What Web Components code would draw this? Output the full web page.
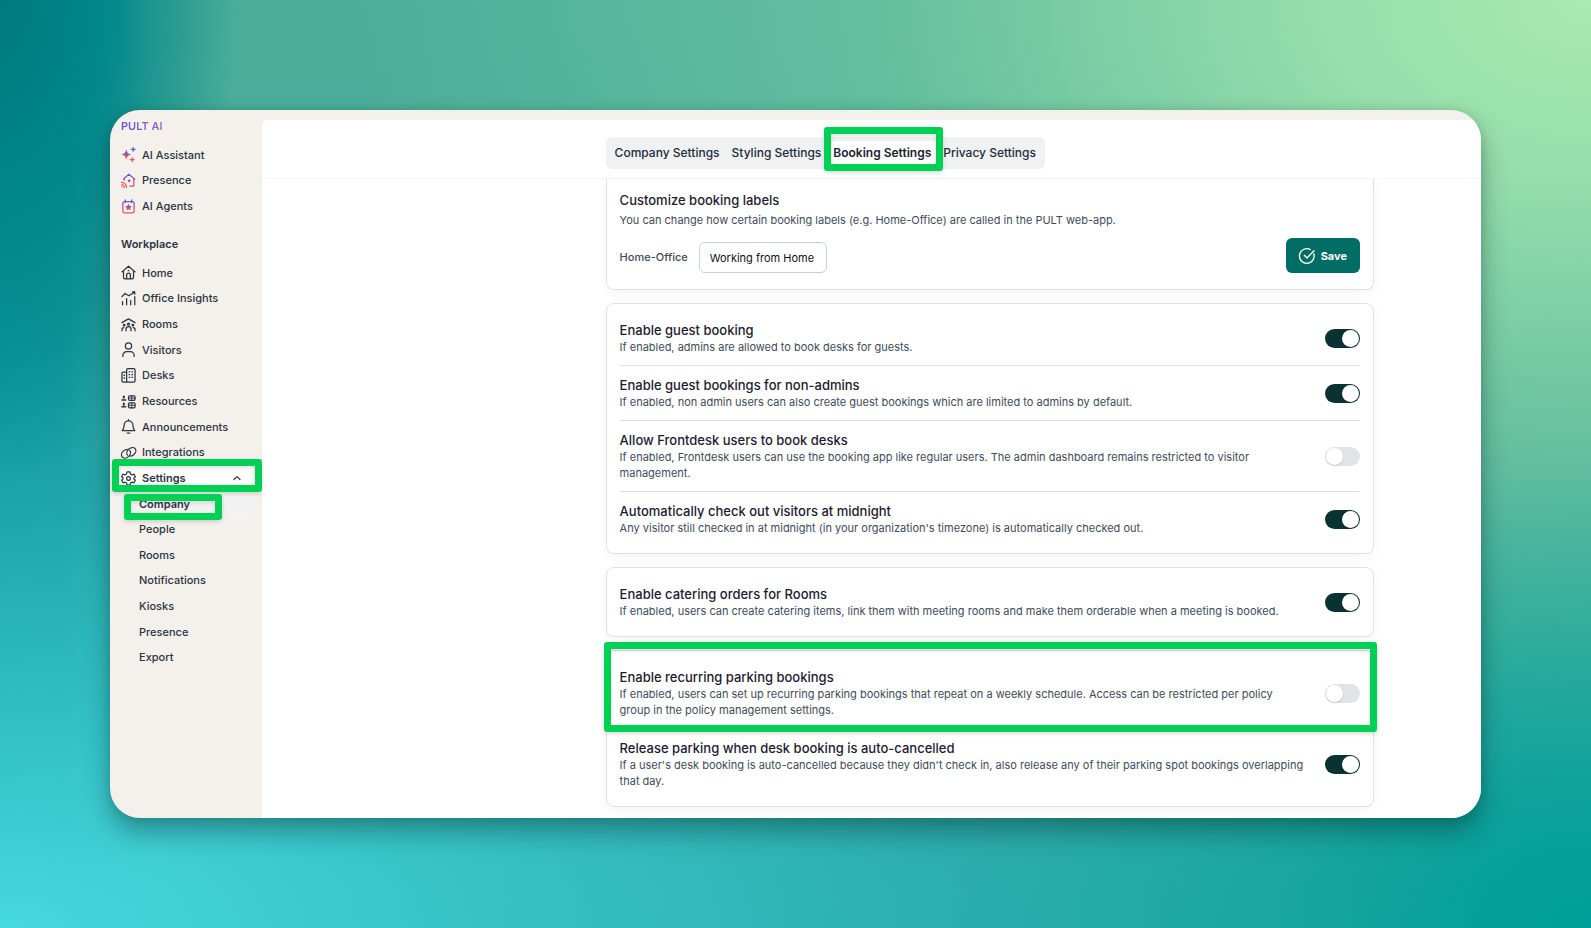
<!DOCTYPE html>
<html lang="en">
<head>
<meta charset="utf-8">
<title>PULT - Booking Settings</title>
<style>
    html {
        height: 100%;
    }
    body {
        margin: 0;
        min-height: 100vh;
        box-sizing: border-box;
        padding: 110px;
        font-family: Inter, "Open Sans", sans-serif;
        font-size: 12px;
        line-height: 16px;
        color: #2b3442;
        --ink: #1d1b31;
        --muted: #404b5a;
        --line: #dfe1e7;
        --mark: #00d154;
        background:
            radial-gradient(ellipse 15% 52% at 0 0, #007a7e 0%, #00868af0 45%, #00929600 100%),
            radial-gradient(ellipse 40% 50% at 100% 100%, #009e98 0%, #009e98e0 20%, #009e9800 100%),
            radial-gradient(ellipse 78% 88% at 100% 0, #a8eab0 0%, #96deab 22%, #70c8a2a0 58%, #50b29c00 100%),
            radial-gradient(ellipse 85% 66% at 0 100%, #45d9e0 0%, #36c6cbd8 35%, #24aab1a0 72%, #1fa3aa00 100%),
            linear-gradient(90deg, #0a989e 0%, #0f999e 4%, #0f999e00 9%),
            linear-gradient(180deg, #4cae99 0%, #46ab98 50%, #38b2a9 100%);
    }
</style>
</head>
<body>

<app-window>
    <side-nav slot="side">
        <nav-heading tone="ai">PULT AI</nav-heading>
        <nav-list rows="3">
            <nav-item icon="sparkles">AI Assistant</nav-item>
            <nav-item icon="presence">Presence</nav-item>
            <nav-item icon="agents">AI Agents</nav-item>
        </nav-list>
        <nav-heading>Workplace</nav-heading>
        <nav-list rows="9">
            <nav-item icon="home">Home</nav-item>
            <nav-item icon="insights">Office Insights</nav-item>
            <nav-item icon="rooms">Rooms</nav-item>
            <nav-item icon="user">Visitors</nav-item>
            <nav-item icon="desks">Desks</nav-item>
            <nav-item icon="resources">Resources</nav-item>
            <nav-item icon="bell">Announcements</nav-item>
            <nav-item icon="link">Integrations</nav-item>
            <nav-item icon="gear" open>Settings<mark-frame slot="mark" class="item"></mark-frame></nav-item>
        </nav-list>
        <nav-list rows="7">
            <nav-item current>Company<mark-frame slot="mark" class="sub"></mark-frame></nav-item>
            <nav-item>People</nav-item>
            <nav-item>Rooms</nav-item>
            <nav-item>Notifications</nav-item>
            <nav-item>Kiosks</nav-item>
            <nav-item>Presence</nav-item>
            <nav-item>Export</nav-item>
        </nav-list>
    </side-nav>

    <tab-bar slot="tabs">
        <tab-link>Company Settings</tab-link>
        <tab-link>Styling Settings</tab-link>
        <tab-link active>Booking Settings<mark-frame slot="mark"></mark-frame></tab-link>
        <tab-link>Privacy Settings</tab-link>
    </tab-bar>

    <settings-card scrolled>
        <label-form name="Home-Office" value="Working from Home">
            <span slot="title">Customize booking labels</span>
            You can change how certain booking labels (e.g. Home-Office) are called in the PULT web-app.
        </label-form>
    </settings-card>

    <settings-card>
        <setting-row name="Enable guest booking" on>If enabled, admins are allowed to book desks for guests.</setting-row>
        <setting-row name="Enable guest bookings for non-admins" on>If enabled, non admin users can also create guest bookings which are limited to admins by default.</setting-row>
        <setting-row name="Allow Frontdesk users to book desks">If enabled, Frontdesk users can use the booking app like regular users. The admin dashboard remains restricted to visitor management.</setting-row>
        <setting-row name="Automatically check out visitors at midnight" on>Any visitor still checked in at midnight (in your organization's timezone) is automatically checked out.</setting-row>
    </settings-card>

    <settings-card>
        <setting-row name="Enable catering orders for Rooms" on>If enabled, users can create catering items, link them with meeting rooms and make them orderable when a meeting is booked.</setting-row>
    </settings-card>

    <settings-card>
        <setting-row name="Enable recurring parking bookings">If enabled, users can set up recurring parking bookings that repeat on a weekly schedule. Access can be restricted per policy group in the policy management settings.<mark-frame slot="mark"></mark-frame></setting-row>
        <setting-row name="Release parking when desk booking is auto-cancelled" on>If a user's desk booking is auto-cancelled because they didn't check in, also release any of their parking spot bookings overlapping that day.</setting-row>
    </settings-card>
</app-window>

<script>
// Icon bodies, all drawn on a 24x24 grid
const ICONS = {
    sparkles: `
        <path fill="url(#ai)" stroke="none" d="M8.500 3c1 6 3 8 8.500 9-5.500 1-7.500 3-8.500 9-1-6-3-8-8.500-9 5.500-1 7.500-3 8.500-9z"/>
        <path d="M19.500 .8v6M16.500 3.800h6" stroke="#5b5bd6"/>
        <path d="M18 17.200v6M15 20.200h6" stroke="#f0505c"/>`,
    presence: `
        <path stroke="url(#ai)" d="M4 9.500 12.500 2 22 10h-1.500v11H14M5 9.500v2"/>
        <circle cx="13" cy="12.500" r="2.200" fill="url(#ai)" stroke="none"/>
        <path stroke="#f0505c" d="M1 15a8 8 0 0 1 8 8M1 19a4 4 0 0 1 4 4"/>
        <circle cx="1.500" cy="22.500" r="1" fill="#f0505c" stroke="none"/>`,
    agents: `
        <rect x="3" y="4" width="18" height="18" rx="3" stroke="url(#ai)"/>
        <path stroke="#5b5bd6" d="M7 1.500v4M17 1.500v4"/>
        <path fill="url(#ai)" stroke="none" d="m12 7.500 1.700 3.500 3.800.5-2.800 2.700.7 3.800-3.400-1.800L8.600 18l.7-3.800-2.800-2.700 3.800-.5z"/>`,
    home: `<path d="M1.500 11 12 2l10.500 9M4 9.500V20a2 2 0 0 0 2 2h12a2 2 0 0 0 2-2V9.500M9 22v-6a3 3 0 0 1 6 0v6M11.500 9h1"/>`,
    insights: `<path d="m1.500 9 5-5 6 3.500L22 1.500M18.500 1.500H22V5M2.500 22v-5M9 22V12M15.500 22v-7M22 22V9"/>`,
    rooms: `
        <path d="M1.500 9 12 3l10.500 6M12 15.500c-2.500 0-4 2-4 4.500V22m4-6.500c2.500 0 4 2 4 4.500V22M1.500 22v-1.500c0-2 1-3.500 3-3.500M22.500 22v-1.500c0-2-1-3.500-3-3.500"/>
        <circle cx="12" cy="11.500" r="1.600"/><circle cx="5" cy="13" r="1.200"/><circle cx="19" cy="13" r="1.200"/>`,
    user: `<circle cx="12" cy="6.500" r="5"/><path d="M3 23v-1.500a6 6 0 0 1 6-6h6a6 6 0 0 1 6 6V23"/>`,
    desks: `
        <path d="M9 22.500V3a2 2 0 0 1 2-2h9.500a2 2 0 0 1 2 2v17.500a2 2 0 0 1-2 2h-17a2 2 0 0 1-2-2V8.500a2 2 0 0 1 2-2H9"/>
        <path stroke-linecap="butt" stroke-width="2.400" stroke-dasharray="2.200 2.200" d="M13.500 5v13.500M18 5v13.500M5.200 10.500V19"/>`,
    resources: `
        <path d="M1.500 9.500h6M1.500 20.500h6" stroke-width="2.400"/>
        <path d="M4.500 4v2M4.500 15v2" stroke-width="3.200"/>
        <rect x="12" y="3" width="10.500" height="7" rx="2"/><rect x="12" y="14" width="10.500" height="8" rx="2"/>
        <path d="M17.200 3v7M12 6.500h10.500M17.200 14v8M12 18h10.500" stroke-width="1.500"/>`,
    bell: `<path d="M12 1v1.500M5 10a7 7 0 0 1 14 0c0 5 1.500 6.500 3 8.500H2c1.500-2 3-3.500 3-8.500zM10 22.500h4"/>`,
    link: `
        <ellipse cx="8" cy="14" rx="8" ry="6" pathLength="100" stroke-dasharray="88 12" transform="rotate(-40 8 14)"/>
        <ellipse cx="16.500" cy="11" rx="8" ry="6" pathLength="100" stroke-dasharray="88 12" transform="rotate(140 16.500 11)"/>`,
    gear: `
        <path d="M9.700 1.500h4.600l.8 3.200 2.400 1.400 3.200-1 2.300 4-2.400 2.300v1.200l2.400 2.300-2.300 4-3.200-1-2.400 1.400-.8 3.200H9.700l-.8-3.200-2.400-1.400-3.200 1-2.300-4 2.400-2.300v-1.200L1 9.100l2.300-4 3.200 1 2.400-1.400z"/>
        <circle cx="12" cy="12" r="3"/>`,
    chevron: `<path stroke-width="3.600" d="m3 16.500 9-8.500 9 8.500"/>`,
    check: `<path d="M22.300 9A11 11 0 1 1 17 2.300M8 11l4 4L22.500 4"/>`
};

class PultIcon extends HTMLElement {
    connectedCallback() {
        this.attachShadow({ mode: 'open' });
        this.shadowRoot.innerHTML = `
            <style>
            :host{
                display: block;
                flex: none;
                width: 15px;
                height: 15px;
            }
            svg{
                display: block;
                width: 100%;
                height: 100%;
                overflow: visible;
                fill: none;
                stroke: currentColor;
                stroke-width: 2;
                stroke-linecap: round;
                stroke-linejoin: round;
            }
            </style>
            <svg viewBox="0 0 24 24" aria-hidden="true">
                <defs>
                    <linearGradient id="ai" gradientUnits="userSpaceOnUse" x1="12" y1="1" x2="12" y2="23">
                        <stop offset="0" stop-color="#5b5bd6"/>
                        <stop offset="1" stop-color="#f0505c"/>
                    </linearGradient>
                </defs>
                ${ICONS[this.getAttribute('name')]}
            </svg>`;
    }
}
customElements.define('pult-icon', PultIcon);

// Green frame laid over whatever element it is slotted into
class MarkFrame extends HTMLElement {
    constructor() {
        super();
        this.attachShadow({ mode: 'open' });
        this.shadowRoot.innerHTML = `
            <style>
            :host{
                position: absolute;
                z-index: 5;
                box-sizing: border-box;
                border: 7px solid var(--mark);
                border-radius: 3px;
                pointer-events: none;
                box-shadow: 0 2px 4px rgba(0,0,0,0.14), inset 0 2px 4px rgba(0,0,0,0.12);
            }
            </style>`;
    }
}
customElements.define('mark-frame', MarkFrame);

class AppWindow extends HTMLElement {
    constructor() {
        super();
        this.attachShadow({ mode: 'open' });
        this.shadowRoot.innerHTML = `
            <style>
            :host{
                display: flex;
                box-sizing: border-box;
                min-height: calc(100vh - 220px);
                background: #f4f0eb;
                border-radius: 30px;
                overflow: hidden;
                box-shadow: 0 14px 26px rgba(0,30,30,0.36), 0 0 8px rgba(0,30,30,0.12);
            }
            aside{
                flex: none;
                width: 152px;
            }
            main{
                flex: 1;
                margin-top: 10px;
                background: #fff;
                border-top-left-radius: 5px;
            }
            header, .cards{
                display: flex;
                justify-content: flex-end;
                padding-right: 107px;
            }
            header{
                padding-top: 17px;
                padding-bottom: 9px;
                border-bottom: 1px solid #f5f5f7;
            }
            header > div, .cards > div{
                width: 69.1%;
            }
            .cards{
                padding-bottom: 11px;
            }
            .cards > div{
                display: flex;
                flex-direction: column;
                gap: 13px;
            }
            </style>
            <aside><slot name="side"></slot></aside>
            <main>
                <header><div><slot name="tabs"></slot></div></header>
                <div class="cards"><div><slot></slot></div></div>
            </main>`;
    }
}
customElements.define('app-window', AppWindow);

class SideNav extends HTMLElement {
    constructor() {
        super();
        this.attachShadow({ mode: 'open' });
        this.shadowRoot.innerHTML = `
            <style>
            :host{
                display: block;
                padding: 8px 8px 0 5px;
            }
            </style>
            <nav><slot></slot></nav>`;
    }
}
customElements.define('side-nav', SideNav);

class NavHeading extends HTMLElement {
    constructor() {
        super();
        this.attachShadow({ mode: 'open' });
        this.shadowRoot.innerHTML = `
            <style>
            :host{
                display: flex;
                padding: 17px 6px 8px;
            }
            :host([tone="ai"]){
                padding-top: 0;
            }
            h2{
                margin: 0;
                font-size: 11px;
                line-height: 16px;
                font-weight: 600;
            }
            :host([tone="ai"]) h2{
                color: transparent;
                background: linear-gradient(90deg, #5b5bd6, #a066b8);
                -webkit-background-clip: text;
                background-clip: text;
            }
            </style>
            <h2><slot></slot></h2>`;
    }
}
customElements.define('nav-heading', NavHeading);

class NavList extends HTMLElement {
    connectedCallback() {
        // rows share the height evenly, a little over 25px each
        const height = Math.ceil(this.getAttribute('rows') * 25.57);
        this.attachShadow({ mode: 'open' });
        this.shadowRoot.innerHTML = `
            <style>
            :host{
                display: grid;
                grid-auto-rows: 1fr;
                min-height: ${height}px;
            }
            </style>
            <slot></slot>`;
    }
}
customElements.define('nav-list', NavList);

class NavItem extends HTMLElement {
    connectedCallback() {
        const icon = this.getAttribute('icon');
        this.attachShadow({ mode: 'open' });
        this.shadowRoot.innerHTML = `
            <style>
            :host{
                display: block;
                position: relative;
            }
            a{
                display: flex;
                align-items: center;
                gap: 6px;
                height: 100%;
                box-sizing: border-box;
                padding: 0 13px 0 6px;
                border-radius: 6px;
                color: inherit;
                font-size: 11px;
                font-weight: 500;
                text-decoration: none;
                white-space: nowrap;
            }
            a.sub{
                padding-left: 24px;
            }
            .text{
                flex: 1;
            }
            .chevron{
                width: 8px;
                height: 8px;
            }
            :host([open]) a{
                background: #fff;
                font-weight: 600;
            }
            :host([current]) a{
                background: #f2f2f2;
                font-weight: 600;
            }
            ::slotted(mark-frame.item){
                inset: -6px -8px -1px -3px;
            }
            ::slotted(mark-frame.sub){
                inset: 3px 32px -3px 9px;
            }
            </style>
            <a href="#" class="${icon ? '' : 'sub'}">
                ${icon ? `<pult-icon name="${icon}"></pult-icon>` : ''}
                <span class="text"><slot></slot></span>
                ${this.hasAttribute('open') ? '<pult-icon class="chevron" name="chevron"></pult-icon>' : ''}
            </a>
            <slot name="mark"></slot>`;
    }
}
customElements.define('nav-item', NavItem);

class TabBar extends HTMLElement {
    constructor() {
        super();
        this.attachShadow({ mode: 'open' });
        this.shadowRoot.innerHTML = `
            <style>
            :host{
                display: flex;
            }
            nav{
                display: flex;
                align-items: center;
                padding: 4px 3px;
                background: #f0f1f3;
                border-radius: 6px;
            }
            </style>
            <nav><slot></slot></nav>`;
    }
}
customElements.define('tab-bar', TabBar);

class TabLink extends HTMLElement {
    constructor() {
        super();
        this.attachShadow({ mode: 'open' });
        this.shadowRoot.innerHTML = `
            <style>
            :host{
                display: block;
                position: relative;
            }
            a{
                display: block;
                padding: 4px 6px;
                border-radius: 5px;
                color: #222c3a;
                font-weight: 500;
                text-decoration: none;
                white-space: nowrap;
            }
            :host([active]) a{
                background: #fff;
                color: #182230;
                font-weight: 600;
            }
            ::slotted(mark-frame){
                inset: -14px -6px -6px -3px;
            }
            </style>
            <a href="#"><slot></slot></a>
            <slot name="mark"></slot>`;
    }
}
customElements.define('tab-link', TabLink);

class SettingsCard extends HTMLElement {
    constructor() {
        super();
        this.attachShadow({ mode: 'open' });
        this.shadowRoot.innerHTML = `
            <style>
            :host{
                display: block;
                padding: 7px 13px;
                background: #fff;
                border: 1px solid var(--line);
                border-radius: 8px;
                box-shadow: 0 4px 12px rgba(30,30,60,0.04);
            }
            /* the top of this card has scrolled under the header */
            :host([scrolled]){
                padding: 12px 13px 16px;
                border-top: 0;
                border-radius: 0 0 8px 8px;
            }
            ::slotted(setting-row:not(:last-child)){
                border-bottom: 1px solid var(--line);
            }
            </style>
            <slot></slot>`;
    }
}
customElements.define('settings-card', SettingsCard);

class LabelForm extends HTMLElement {
    connectedCallback() {
        this.attachShadow({ mode: 'open' });
        this.shadowRoot.innerHTML = `
            <style>
            :host{
                display: block;
            }
            h3{
                margin: 0 0 3px;
                font-size: 13px;
                line-height: 18px;
                font-weight: 500;
                color: var(--ink);
            }
            p{
                margin: 0 0 10px;
                font-size: 11px;
                color: var(--muted);
            }
            form{
                display: flex;
                align-items: flex-end;
                gap: 11px;
            }
            label{
                font-weight: 500;
                font-size: 11px;
                line-height: 31px;
                color: var(--muted);
            }
            input{
                box-sizing: border-box;
                width: 128px;
                height: 31px;
                padding: 0 10px;
                border: 1px solid #c9ced8;
                border-radius: 6px;
                font: inherit;
                font-size: 11px;
                color: #111;
                background: #fff;
            }
            button{
                display: flex;
                align-items: center;
                gap: 6px;
                height: 35px;
                margin-left: auto;
                padding: 0 13px;
                border: 0;
                border-radius: 6px;
                background: #006d64;
                color: #fff;
                font: inherit;
                font-size: 11px;
                font-weight: 700;
            }
            button pult-icon{
                width: 16px;
                height: 16px;
            }
            </style>
            <h3><slot name="title"></slot></h3>
            <p><slot></slot></p>
            <form>
                <label for="value">${this.getAttribute('name')}</label>
                <input id="value" type="text" value="${this.getAttribute('value')}">
                <button type="button"><pult-icon name="check"></pult-icon>Save</button>
            </form>`;
    }
}
customElements.define('label-form', LabelForm);

class SettingRow extends HTMLElement {
    connectedCallback() {
        this.attachShadow({ mode: 'open' });
        this.shadowRoot.innerHTML = `
            <style>
            :host{
                display: flex;
                position: relative;
                align-items: center;
                gap: 19px;
                padding: 10px 0;
            }
            .text{
                flex: 1;
            }
            label{
                display: block;
                font-size: 13px;
                line-height: 18px;
                font-weight: 500;
                color: var(--ink);
            }
            p{
                margin: 0;
                font-size: 11px;
                color: var(--muted);
            }
            input{
                appearance: none;
                flex: none;
                width: 35px;
                height: 19px;
                margin: 0;
                padding: 1px;
                display: flex;
                border-radius: 10px;
                background: #e2e2e9;
            }
            input::before{
                content: "";
                width: 17px;
                height: 17px;
                border-radius: 50%;
                background: #fff;
                box-shadow: 0 1px 2px rgba(0,0,0,0.12);
            }
            input:checked{
                justify-content: flex-end;
                background: #0b3233;
            }
            ::slotted(mark-frame){
                inset: -16px -17px -4px -16px;
            }
            </style>
            <div class="text">
                <label for="toggle">${this.getAttribute('name')}</label>
                <p id="about"><slot></slot></p>
            </div>
            <input id="toggle" type="checkbox" role="switch" aria-describedby="about" ${this.hasAttribute('on') ? 'checked' : ''}>
            <slot name="mark"></slot>`;
    }
}
customElements.define('setting-row', SettingRow);
</script>
</body>
</html>
